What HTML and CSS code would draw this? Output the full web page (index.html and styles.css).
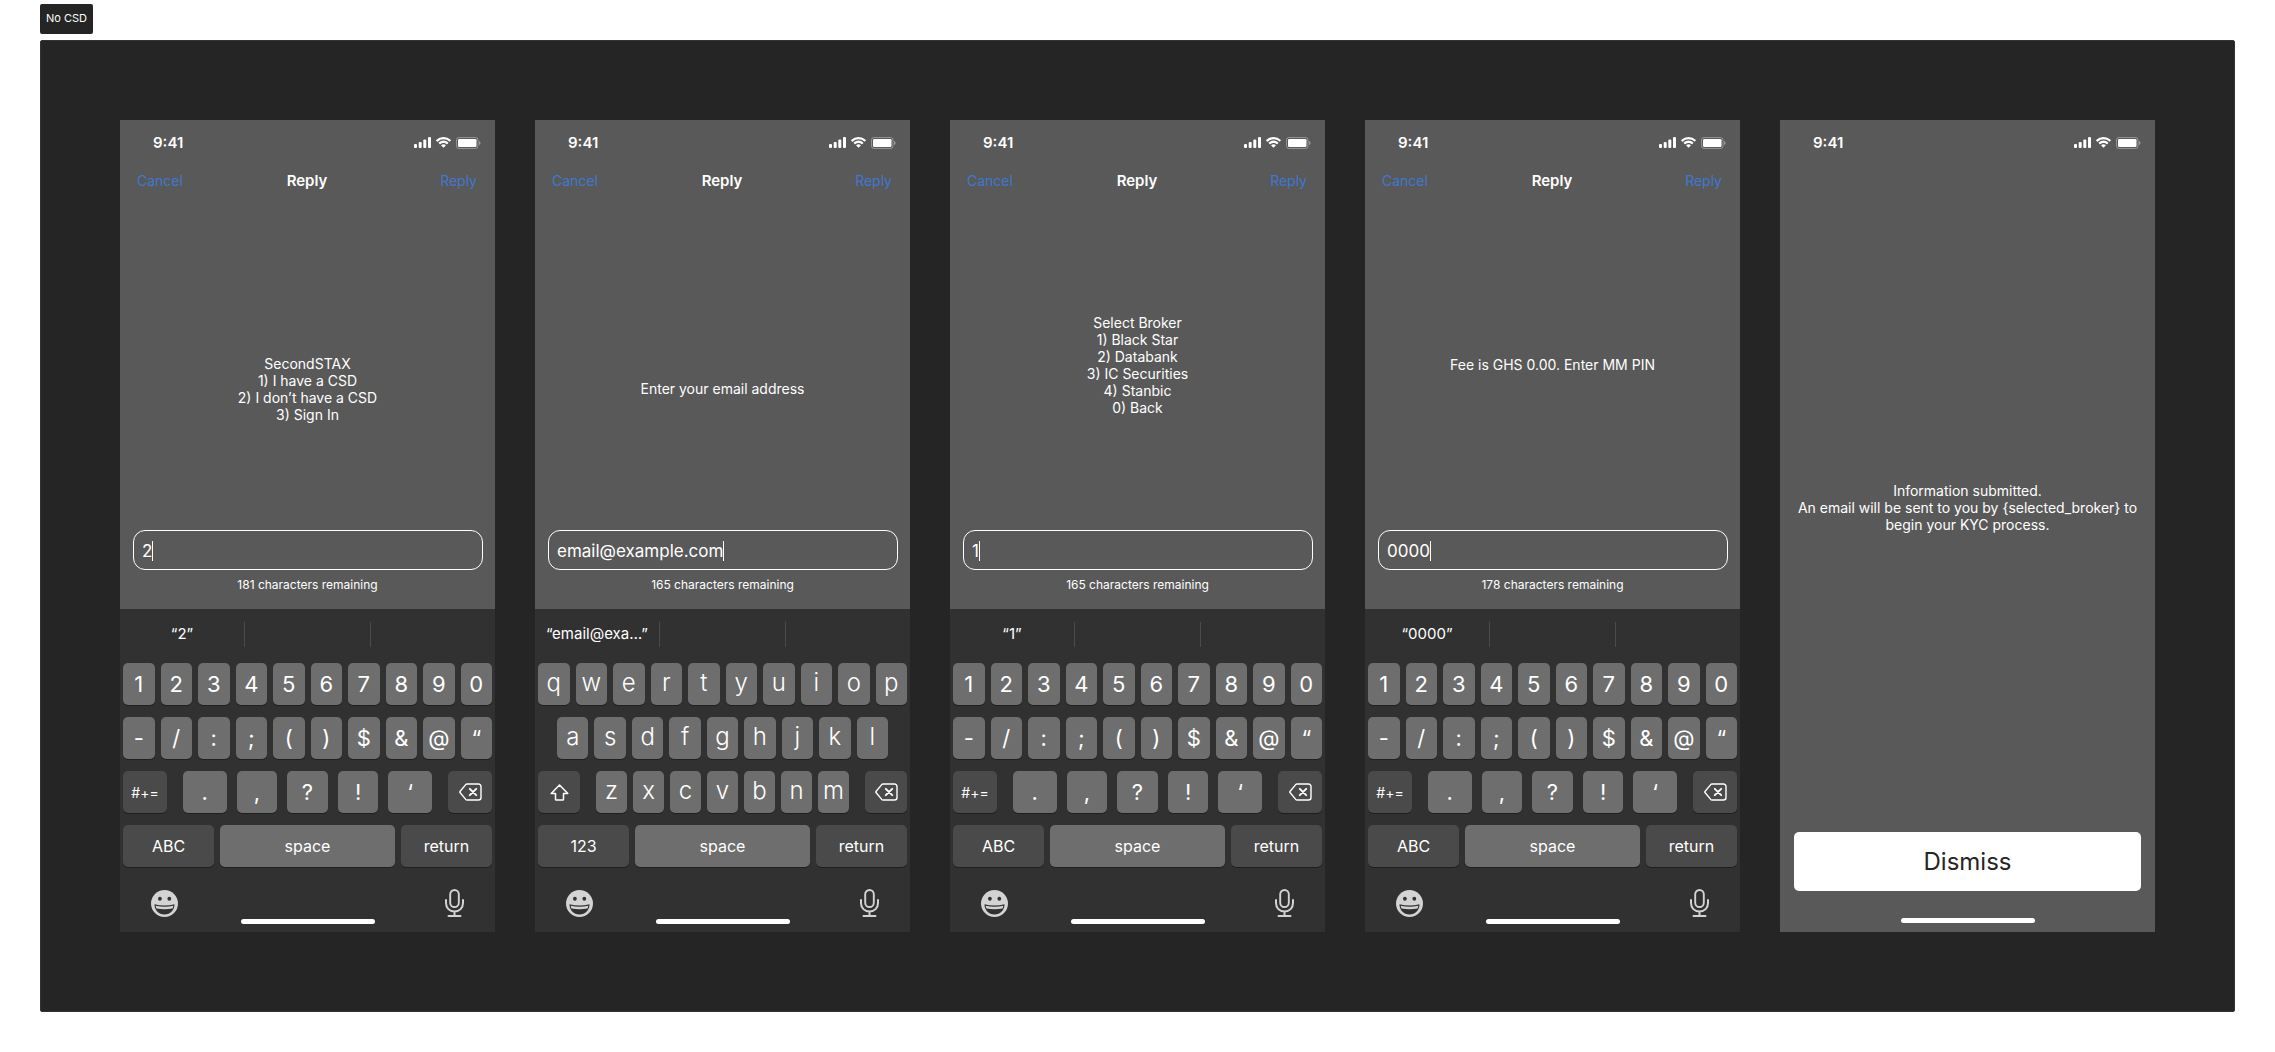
FILE: index.html
```
<!DOCTYPE html>
<html lang="en">
<head>
  <meta charset="UTF-8" />
  <meta name="viewport" content="width=device-width, initial-scale=1.0"/>
  <title>No CSD</title>
  <link rel="stylesheet" href="styles.css">
</head>
<body>
  <!-- Shared icons -->
  <svg class="sprite" aria-hidden="true">
    <symbol id="signal" viewBox="0 0 17 11">
      <rect x="0" y="7" width="3" height="4" rx="1"/>
      <rect x="4.7" y="5" width="3" height="6" rx="1"/>
      <rect x="9.3" y="2.4" width="3" height="8.6" rx="1"/>
      <rect x="14" y="0" width="3" height="11" rx="1"/>
    </symbol>
    <symbol id="wifi" viewBox="0 0 15 11">
      <path d="M7.5 2.3c2.2 0 4.2.8 5.8 2.3.1.1.3.1.4 0L14.9 3.5c.1-.1.1-.3 0-.5a10.7 10.7 0 0 0-14.8 0c-.1.2-.1.4 0 .5l1.2 1.2c.1.1.3.1.4 0A8.3 8.3 0 0 1 7.5 2.3z"/>
      <path d="M7.5 6c1.2 0 2.4.5 3.2 1.2.2.1.4.1.5 0l1.1-1.2c.2-.1.2-.3 0-.5a7 7 0 0 0-9.6 0c-.2.2-.2.4 0 .5l1.1 1.2c.1.1.3.1.5 0A4.8 4.8 0 0 1 7.5 6z"/>
      <path d="M9.8 8.2c.1.1.1.3 0 .4l-2 2c-.2.2-.4.2-.6 0l-2-2c-.1-.1-.1-.3 0-.4a3.5 3.5 0 0 1 4.6 0z"/>
    </symbol>
    <symbol id="battery" viewBox="0 0 25 12">
      <rect x=".5" y=".5" width="21.5" height="11" rx="2.5" fill="none" stroke="#fff" opacity=".35"/>
      <path d="M23 4v4c.8-.3 1.5-1.1 1.5-2S23.8 4.300 23 4z" opacity=".4"/>
      <rect x="2" y="2" width="18.500" height="8" rx="1.3"/>
    </symbol>
    <symbol id="delete" viewBox="0 0 23 18">
      <path d="M8 1h11.5A2.5 2.5 0 0 1 22 3.5v11a2.5 2.5 0 0 1-2.5 2.5H8c-.5 0-.9-.2-1.300-.6L1 9.500c-.3-.3-.3-.7 0-1l5.700-6.900C7.100 1.200 7.500 1 8 1z" fill="none" stroke="#fff" stroke-width="1.4"/>
      <path d="M10.800 5.800l6.400 6.400M17.200 5.800l-6.400 6.400" fill="none" stroke="#fff" stroke-width="1.900" stroke-linecap="round"/>
    </symbol>
    <symbol id="shift" viewBox="0 0 19 17">
      <path d="M9.5 1L1.2 9.5H5.500v5.700c0 .5.300.8.800.8h6.400c.5 0 .8-.3.800-.8V9.500h4.300z" fill="none" stroke="#fff" stroke-width="1.500" stroke-linejoin="round"/>
    </symbol>
    <symbol id="emoji" viewBox="0 0 27 27">
      <circle cx="13.5" cy="13.5" r="13.5" fill="#d3d3d3"/>
      <ellipse cx="8.9" cy="8.7" rx="1.9" ry="2" fill="#313131"/>
      <ellipse cx="18.3" cy="8.7" rx="1.9" ry="2" fill="#313131"/>
      <path d="M3.5 14.2c6.5 1.7 13.5 1.7 20 0 0 5.900-4 10.200-10 10.200S3.500 20.100 3.500 14.200z" fill="#313131"/>
      <path d="M4.700 15.700c5.700 1.400 11.900 1.400 17.600 0-.1 1-.4 1.900-.8 2.700-5.200 1.100-10.800 1.100-16 0-.4-.8-.7-1.700-.8-2.700z" fill="#d3d3d3"/>
    </symbol>
    <symbol id="mic" viewBox="0 0 19 28">
      <rect x="5.200" y="1" width="8.600" height="17" rx="4.300" fill="none" stroke="#d3d3d3" stroke-width="1.900"/>
      <path d="M1 11v3c0 5 3.500 8.500 8.500 8.500S18 19 18 14v-3M9.500 22.500V27M3.500 27h12" fill="none" stroke="#d3d3d3" stroke-width="2" stroke-linecap="round"/>
    </symbol>
  </svg>

  <h1 class="section-label">No CSD</h1>

  <main class="board">
    <!-- Main menu -->
    <section class="phone">
      <div class="status-bar">
        <span>9:41</span>
        <div class="status-icons">
          <svg class="signal"><use href="#signal"/></svg>
          <svg class="wifi"><use href="#wifi"/></svg>
          <svg class="battery"><use href="#battery"/></svg>
        </div>
      </div>
      <header class="nav-bar">
        <button>Cancel</button>
        <h2>Reply</h2>
        <button>Reply</button>
      </header>
      <div class="message low">
        <p>SecondSTAX<br>1) I have a CSD<br>2) I don’t have a CSD<br>3) Sign In</p>
      </div>
      <label class="field">
        <input type="text" value="2" size="1" aria-label="Reply text"><span class="caret"></span>
      </label>
      <p class="counter">181 characters remaining</p>
      <div class="keyboard">
        <div class="suggestions">
          <button>“2”</button><button aria-label="Suggestion 2"></button><button aria-label="Suggestion 3"></button>
        </div>
        <div class="keys">
          <div class="row">
            <button>1</button><button>2</button><button>3</button><button>4</button><button>5</button><button>6</button><button>7</button><button>8</button><button>9</button><button>0</button>
          </div>
          <div class="row">
            <button>-</button><button>/</button><button>:</button><button>;</button><button>(</button><button>)</button><button>$</button><button>&amp;</button><button>@</button><button>“</button>
          </div>
          <div class="row row-symbols">
            <button class="dark small">#+=</button>
            <div class="group">
              <button>.</button><button>,</button><button>?</button><button>!</button><button>‘</button>
            </div>
            <button class="dark" aria-label="Delete"><svg class="delete"><use href="#delete"/></svg></button>
          </div>
          <div class="row row-bottom">
            <button class="dark">ABC</button><button>space</button><button class="dark">return</button>
          </div>
        </div>
        <div class="tools">
          <button aria-label="Emoji"><svg class="emoji"><use href="#emoji"/></svg></button>
          <button aria-label="Dictate"><svg class="mic"><use href="#mic"/></svg></button>
        </div>
        <div class="home-bar"></div>
      </div>
    </section>

    <!-- Email -->
    <section class="phone">
      <div class="status-bar">
        <span>9:41</span>
        <div class="status-icons">
          <svg class="signal"><use href="#signal"/></svg>
          <svg class="wifi"><use href="#wifi"/></svg>
          <svg class="battery"><use href="#battery"/></svg>
        </div>
      </div>
      <header class="nav-bar">
        <button>Cancel</button>
        <h2>Reply</h2>
        <button>Reply</button>
      </header>
      <div class="message low">
        <p>Enter your email address</p>
      </div>
      <label class="field">
        <input type="text" value="email@example.com" size="17" aria-label="Reply text"><span class="caret"></span>
      </label>
      <p class="counter">165 characters remaining</p>
      <div class="keyboard">
        <div class="suggestions">
          <button>“email@exa…”</button><button aria-label="Suggestion 2"></button><button aria-label="Suggestion 3"></button>
        </div>
        <div class="keys letters">
          <div class="row">
            <button>q</button><button>w</button><button>e</button><button>r</button><button>t</button><button>y</button><button>u</button><button>i</button><button>o</button><button>p</button>
          </div>
          <div class="row row-inset">
            <button>a</button><button>s</button><button>d</button><button>f</button><button>g</button><button>h</button><button>j</button><button>k</button><button>l</button>
          </div>
          <div class="row row-shift">
            <button class="dark" aria-label="Shift"><svg class="shift"><use href="#shift"/></svg></button>
            <div class="group">
              <button>z</button><button>x</button><button>c</button><button>v</button><button>b</button><button>n</button><button>m</button>
            </div>
            <button class="dark" aria-label="Delete"><svg class="delete"><use href="#delete"/></svg></button>
          </div>
          <div class="row row-bottom">
            <button class="dark">123</button><button>space</button><button class="dark">return</button>
          </div>
        </div>
        <div class="tools">
          <button aria-label="Emoji"><svg class="emoji"><use href="#emoji"/></svg></button>
          <button aria-label="Dictate"><svg class="mic"><use href="#mic"/></svg></button>
        </div>
        <div class="home-bar"></div>
      </div>
    </section>

    <!-- Broker -->
    <section class="phone">
      <div class="status-bar">
        <span>9:41</span>
        <div class="status-icons">
          <svg class="signal"><use href="#signal"/></svg>
          <svg class="wifi"><use href="#wifi"/></svg>
          <svg class="battery"><use href="#battery"/></svg>
        </div>
      </div>
      <header class="nav-bar">
        <button>Cancel</button>
        <h2>Reply</h2>
        <button>Reply</button>
      </header>
      <div class="message">
        <p>Select Broker<br>1) Black Star<br>2) Databank<br>3) IC Securities<br>4) Stanbic<br>0) Back</p>
      </div>
      <label class="field">
        <input type="text" value="1" size="1" aria-label="Reply text"><span class="caret"></span>
      </label>
      <p class="counter">165 characters remaining</p>
      <div class="keyboard">
        <div class="suggestions">
          <button>“1”</button><button aria-label="Suggestion 2"></button><button aria-label="Suggestion 3"></button>
        </div>
        <div class="keys">
          <div class="row">
            <button>1</button><button>2</button><button>3</button><button>4</button><button>5</button><button>6</button><button>7</button><button>8</button><button>9</button><button>0</button>
          </div>
          <div class="row">
            <button>-</button><button>/</button><button>:</button><button>;</button><button>(</button><button>)</button><button>$</button><button>&amp;</button><button>@</button><button>“</button>
          </div>
          <div class="row row-symbols">
            <button class="dark small">#+=</button>
            <div class="group">
              <button>.</button><button>,</button><button>?</button><button>!</button><button>‘</button>
            </div>
            <button class="dark" aria-label="Delete"><svg class="delete"><use href="#delete"/></svg></button>
          </div>
          <div class="row row-bottom">
            <button class="dark">ABC</button><button>space</button><button class="dark">return</button>
          </div>
        </div>
        <div class="tools">
          <button aria-label="Emoji"><svg class="emoji"><use href="#emoji"/></svg></button>
          <button aria-label="Dictate"><svg class="mic"><use href="#mic"/></svg></button>
        </div>
        <div class="home-bar"></div>
      </div>
    </section>

    <!-- PIN -->
    <section class="phone">
      <div class="status-bar">
        <span>9:41</span>
        <div class="status-icons">
          <svg class="signal"><use href="#signal"/></svg>
          <svg class="wifi"><use href="#wifi"/></svg>
          <svg class="battery"><use href="#battery"/></svg>
        </div>
      </div>
      <header class="nav-bar">
        <button>Cancel</button>
        <h2>Reply</h2>
        <button>Reply</button>
      </header>
      <div class="message">
        <p>Fee is GHS 0.00. Enter MM PIN</p>
      </div>
      <label class="field">
        <input type="text" value="0000" size="4" aria-label="Reply text"><span class="caret"></span>
      </label>
      <p class="counter">178 characters remaining</p>
      <div class="keyboard">
        <div class="suggestions">
          <button>“0000”</button><button aria-label="Suggestion 2"></button><button aria-label="Suggestion 3"></button>
        </div>
        <div class="keys">
          <div class="row">
            <button>1</button><button>2</button><button>3</button><button>4</button><button>5</button><button>6</button><button>7</button><button>8</button><button>9</button><button>0</button>
          </div>
          <div class="row">
            <button>-</button><button>/</button><button>:</button><button>;</button><button>(</button><button>)</button><button>$</button><button>&amp;</button><button>@</button><button>“</button>
          </div>
          <div class="row row-symbols">
            <button class="dark small">#+=</button>
            <div class="group">
              <button>.</button><button>,</button><button>?</button><button>!</button><button>‘</button>
            </div>
            <button class="dark" aria-label="Delete"><svg class="delete"><use href="#delete"/></svg></button>
          </div>
          <div class="row row-bottom">
            <button class="dark">ABC</button><button>space</button><button class="dark">return</button>
          </div>
        </div>
        <div class="tools">
          <button aria-label="Emoji"><svg class="emoji"><use href="#emoji"/></svg></button>
          <button aria-label="Dictate"><svg class="mic"><use href="#mic"/></svg></button>
        </div>
        <div class="home-bar"></div>
      </div>
    </section>

    <!-- Confirmation -->
    <section class="phone">
      <div class="status-bar">
        <span>9:41</span>
        <div class="status-icons">
          <svg class="signal"><use href="#signal"/></svg>
          <svg class="wifi"><use href="#wifi"/></svg>
          <svg class="battery"><use href="#battery"/></svg>
        </div>
      </div>
      <div class="message done">
        <p>Information submitted.<br>An email will be sent to you by {selected_broker} to begin your KYC process.</p>
      </div>
      <button class="dismiss">Dismiss</button>
      <div class="home-bar"></div>
    </section>
  </main>
</body>
</html>
```
FILE: styles.css
```
:root {
  --board-bg: #252525;
  --board-border: #333333;
  --phone-bg: #595959;
  --keyboard-bg: #313131;
  --key-bg: #6e6e6e;
  --key-dark: #4a4a4a;
  --key-shadow: #1f1f1f;
  --link-color: #3f78d0;
  --text-color: #ffffff;
}

* {
  margin: 0;
  padding: 0;
  box-sizing: border-box;
}
body {
  font-family: Inter, 'Liberation Sans', sans-serif;
  background: #fff;
  color: var(--text-color);
  padding: 4px 40px 40px;
}
button {
  font-family: inherit;
  color: inherit;
  background: none;
  border: none;
  cursor: pointer;
}
svg {
  display: block;
  fill: #fff;
}
.sprite {
  position: absolute;
  width: 0;
  height: 0;
}

.section-label {
  width: fit-content;
  padding: 0 6px 2px;
  margin-bottom: 6px;
  background: var(--board-bg);
  border-radius: 2px;
  font-size: 11px;
  font-weight: 400;
  line-height: 28px;
}
.board {
  display: grid;
  grid-template-columns: repeat(5, 1fr);
  gap: 40px;
  padding: 79px;
  background: var(--board-bg);
  border: 1px solid var(--board-border);
  border-radius: 2px;
}

.phone {
  display: flex;
  flex-direction: column;
  aspect-ratio: 375 / 812;
  background: var(--phone-bg);
}
.status-bar {
  display: flex;
  justify-content: space-between;
  align-items: center;
  height: 45px;
  padding: 0 14px 0 33px;
  font-size: 15px;
  line-height: 18px;
  font-weight: 600;
}
.status-icons {
  display: flex;
  align-items: center;
  gap: 5px;
}
.signal {
  width: 17px;
  height: 11px;
}
.wifi {
  width: 15px;
  height: 11px;
}
.battery {
  width: 25px;
  height: 12px;
}

.nav-bar {
  display: grid;
  grid-template-columns: 1fr auto 1fr;
  align-items: center;
  height: 30px;
  margin-bottom: 6px;
  padding: 0 18px 0 17px;
}
.nav-bar h2 {
  font-size: 15px;
  font-weight: 600;
}
.nav-bar button {
  justify-self: start;
  font-size: 14px;
  color: var(--link-color);
}
.nav-bar button:last-child {
  justify-self: end;
}

.message {
  flex: 1;
  display: flex;
  justify-content: center;
  align-items: center;
  padding: 0 16px 2px;
  font-size: 14px;
  line-height: 17px;
  text-align: center;
}
.message.low {
  padding-top: 48px;
}
.message.done {
  padding-top: 20px;
}

.field {
  display: flex;
  align-items: center;
  height: 40px;
  margin: 0 12px 0 13px;
  padding: 2px 8px 0;
  border: 1px solid #fff;
  border-radius: 12px;
}
.field input {
  field-sizing: content;
  font-family: inherit;
  font-size: 17px;
  color: inherit;
  background: none;
  border: none;
  outline: none;
}
.caret {
  width: 1px;
  height: 20px;
  background: #fff;
}
.counter {
  margin: 7px 0 17px;
  font-size: 12px;
  line-height: 15px;
  text-align: center;
}

.keyboard {
  padding-bottom: 8px;
  background: var(--keyboard-bg);
}
.suggestions {
  display: grid;
  grid-template-columns: 124fr 126fr 125fr;
  align-items: center;
  height: 51px;
  margin-bottom: 3px;
}
.suggestions button {
  height: 25px;
  padding-bottom: 3px;
  font-size: 15px;
  white-space: nowrap;
}
.suggestions button + button {
  border-left: 1px solid #4b4b4b;
}

.keys {
  display: grid;
  gap: 12px;
  padding: 0 3px;
}
.row,
.group {
  display: grid;
  grid-auto-flow: column;
  grid-auto-columns: minmax(0, 1fr);
  gap: 6px;
}
.keys button {
  display: flex;
  justify-content: center;
  align-items: center;
  height: 42px;
  background: var(--key-bg);
  border-radius: 5px;
  box-shadow: 0 1px 0 var(--key-shadow);
  font-size: 22px;
}
.keys .dark {
  background: var(--key-dark);
}
.keys .small {
  font-size: 14px;
}
.letters button {
  padding-bottom: 4px;
  font-size: 24px;
  font-weight: 300;
}
.row-inset {
  padding: 0 19px;
}
.row-symbols {
  grid-template-columns: 44px 1fr 44px;
  gap: 16px;
}
.row-symbols .group {
  grid-template-columns: 44fr 41fr 41fr 41fr 44fr;
  gap: 10px;
}
.row-shift {
  grid-template-columns: 42px 1fr 42px;
  gap: 16px;
}
.row-bottom {
  grid-template-columns: 91fr 175fr 91fr;
}
.keys .row-bottom button {
  padding: 0;
  font-size: 16px;
  font-weight: 400;
}
.keys .dark:has(svg) {
  padding: 0;
}
.delete {
  width: 23px;
  height: 18px;
}
.shift {
  width: 19px;
  height: 17px;
}

.tools {
  display: flex;
  justify-content: space-between;
  align-items: center;
  height: 28px;
  margin: 22px 31px 2px;
}
.emoji {
  width: 27px;
  height: 27px;
}
.mic {
  width: 19px;
  height: 28px;
}
.home-bar {
  width: 134px;
  height: 5px;
  margin: 0 auto;
  background: #fff;
  border-radius: 3px;
}

.dismiss {
  height: 59px;
  margin: 0 14px 27px;
  background: #fff;
  border-radius: 5px;
  font-size: 24px;
  color: #252525;
}
.dismiss + .home-bar {
  margin-bottom: 9px;
}
```
